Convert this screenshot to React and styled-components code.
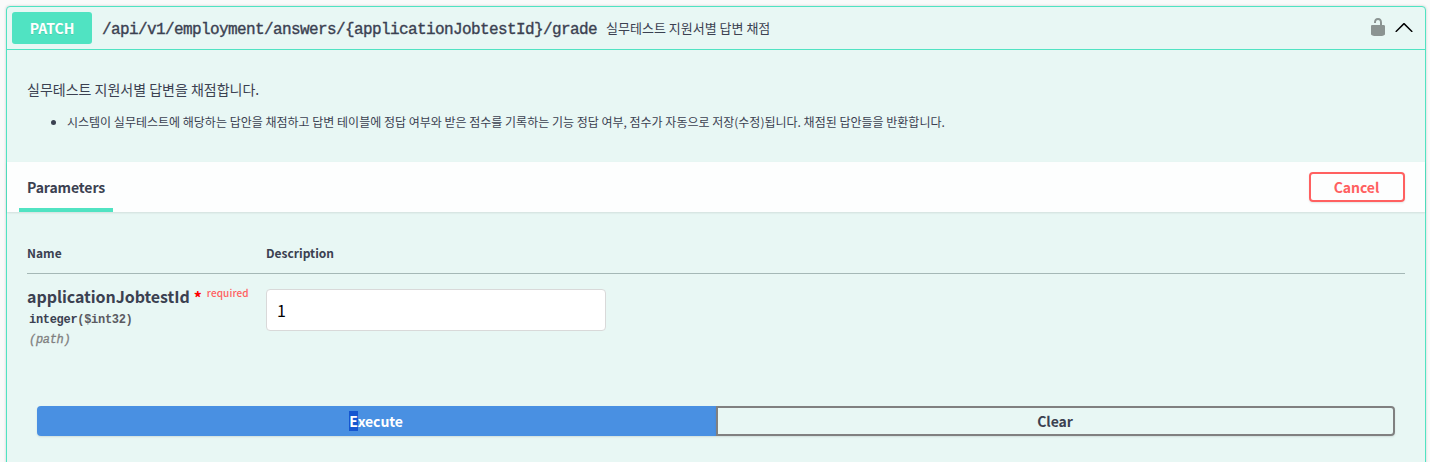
import React from "react";
import styled, { createGlobalStyle } from "styled-components";

const GlobalStyle = createGlobalStyle`
  *, *::before, *::after { box-sizing: border-box; }
  body {
    margin: 0;
    height: 462px;
    overflow: hidden;
    background: #fafafa;
    color: #3b4151;
    font-family: "Noto Sans CJK KR", "Noto Sans", sans-serif;
  }
`;

const Page = styled.main`
  height: 462px;
  padding: 6px 4px 0 6px;
  overflow: hidden;
`;

const Operation = styled.article`
  height: 480px;
  border: 1px solid #50e3c2;
  border-radius: 4px;
  background: #e8f7f4;
  box-shadow: 0 0 3px rgba(0, 0, 0, 0.19);
`;

const Summary = styled.header`
  display: flex;
  align-items: center;
  height: 43px;
  padding: 0 11px 0 5px;
  border-bottom: 1px solid #50e3c2;
`;

const Method = styled.span`
  width: 80px;
  height: 32px;
  border-radius: 3px;
  background: #50e3c2;
  color: #fff;
  font-size: 14px;
  font-weight: 700;
  line-height: 33px;
  text-align: center;
  text-shadow: 0 1px 0 rgba(0, 0, 0, 0.1);
`;

const Path = styled.span`
  margin-left: 10px;
  padding-top: 3px;
  font-family: "Liberation Mono", monospace;
  font-size: 16px;
  letter-spacing: -0.6px;
  line-height: 20px;
  -webkit-text-stroke: 0.35px currentColor;
`;

const SummaryText = styled.span`
  flex: 1;
  margin-left: 9px;
  font-size: 13px;
  line-height: 20px;
`;

const LockIcon = styled.svg`
  width: 20px;
  height: 20px;
  margin-right: 6px;
  margin-top: -2px;
`;

const ChevronIcon = styled.svg`
  width: 20px;
  height: 20px;
  margin-top: -3px;
`;

const Description = styled.section`
  height: 112px;
  padding: 29px 20px 0;
`;

const Lead = styled.p`
  margin: 0;
  font-size: 14px;
  line-height: 20px;
`;

const Notes = styled.ul`
  margin: 14px 0 0;
  padding-left: 40px;
  font-size: 12px;
  line-height: 18px;
`;

const SectionBar = styled.div`
  display: flex;
  align-items: center;
  justify-content: space-between;
  height: 50px;
  padding: 0 20px 0 12px;
  background: #fdfefe;
  box-shadow: 0 1px 2px rgba(0, 0, 0, 0.1);
`;

const Tab = styled.h4`
  width: 94px;
  height: 50px;
  margin: 0;
  padding-left: 8px;
  border-bottom: 4px solid #50e3c2;
  font-size: 14px;
  font-weight: 700;
  letter-spacing: -0.1px;
  line-height: 51px;
  white-space: nowrap;
`;

const Button = styled.button`
  flex: ${(p) => (p.$grow ? "1" : "none")};
  width: ${(p) => p.$width || "auto"};
  height: 30px;
  padding: 0 1px 0 0;
  border: 2px solid ${(p) => p.$border};
  border-radius: ${(p) => p.$radius || "4px"};
  background: ${(p) => p.$fill || "transparent"};
  box-shadow: 0 1px 2px rgba(0, 0, 0, 0.1);
  color: ${(p) => p.$color};
  font-family: inherit;
  font-size: 14px;
  font-weight: 700;
  letter-spacing: -0.08px;
  line-height: 26px;
`;

const Selected = styled.span`
  display: inline-block;
  height: 20px;
  background: #1556d0;
  line-height: 20px;
`;

const Parameters = styled.section`
  padding: 31px 20px 0;
`;

const Columns = styled.div`
  display: grid;
  grid-template-columns: 239px 1fr;
`;

const HeadRow = styled(Columns)`
  height: 31px;
  border-bottom: 1px solid #a5b8b6;
  font-size: 12px;
  font-weight: 700;
  line-height: 20px;
`;

const ParamRow = styled(Columns)`
  height: 132px;
  padding-top: 15px;
`;

const ParamName = styled.div`
  display: flex;
  height: 21px;
  font-size: 16px;
  font-weight: 700;
  letter-spacing: -0.05px;
  line-height: 15px;
`;

const Star = styled.span`
  margin-left: 4px;
  color: #f00;
  font-size: 16px;
  line-height: 16px;
`;

const Required = styled.span`
  margin-left: 5px;
  color: #ff6060;
  font-size: 10px;
  font-weight: 500;
  letter-spacing: 0.1px;
  line-height: 8px;
`;

const Mono = styled.div`
  padding-left: 2px;
  color: ${(p) => p.$color || "inherit"};
  font-family: "Liberation Mono", monospace;
  font-size: 12px;
  font-style: ${(p) => (p.$italic ? "italic" : "normal")};
  font-weight: ${(p) => (p.$italic ? 400 : 700)};
  letter-spacing: -0.3px;
  line-height: 20px;
  -webkit-text-stroke: ${(p) => (p.$italic ? "0.3px currentColor" : "0")};
`;

const Format = styled.span`
  color: #5b5b62;
`;

const TextInput = styled.input`
  width: 340px;
  height: 42px;
  padding: 0 10px;
  border: 1px solid #d9d9d9;
  border-radius: 4px;
  background: #fff;
  color: #000;
  font-family: inherit;
  font-size: 16px;
`;

const Actions = styled.div`
  display: flex;
  padding: 0 10px;
`;

export default function App() {
  return (
    <Page>
      <GlobalStyle />
      <Operation>
        <Summary>
          <Method>PATCH</Method>
          <Path>{"/api/v1/employment/answers/{applicationJobtestId}/grade"}</Path>
          <SummaryText>실무테스트 지원서별 답변 채점</SummaryText>
          <LockIcon viewBox="0 0 20 20" fill="#8b9492">
            <path d="M15.8 8H14V5.6C14 2.703 12.665 1 10 1 7.334 1 6 2.703 6 5.6V6h2v-.801C8 3.754 8.797 3 10 3c1.203 0 2 .754 2 2.199V8H4c-.553 0-1 .646-1 1.199V17c0 .549.428 1.139.951 1.307l1.197.387C5.672 18.861 6.55 19 7.1 19h5.8c.549 0 1.428-.139 1.951-.307l1.196-.387c.524-.167.953-.757.953-1.306V9.199C17 8.646 16.352 8 15.8 8z" />
          </LockIcon>
          <ChevronIcon viewBox="0 0 20 20">
            <path d="M17.418 14.908c.272.281.701.281.979 0s.271-.712 0-.969l-7.908-7.83c-.27-.268-.707-.268-.979 0l-7.908 7.83c-.27.268-.27.701 0 .969.271.268.709.268.979 0L10 7.767l7.418 7.141z" />
          </ChevronIcon>
        </Summary>
        <Description>
          <Lead>실무테스트 지원서별 답변을 채점합니다.</Lead>
          <Notes>
            <li>
              시스템이 실무테스트에 해당하는 답안을 채점하고 답변 테이블에 정답 여부와 받은 점수를 기록하는 기능 정답
              여부, 점수가 자동으로 저장(수정)됩니다. 채점된 답안들을 반환합니다.
            </li>
          </Notes>
        </Description>
        <SectionBar>
          <Tab>Parameters</Tab>
          <Button $width="96px" $border="#ff6060" $color="#ff6060">
            Cancel
          </Button>
        </SectionBar>
        <Parameters>
          <HeadRow>
            <span>Name</span>
            <span>Description</span>
          </HeadRow>
          <ParamRow>
            <div>
              <ParamName>
                applicationJobtestId
                <Star>*</Star>
                <Required>required</Required>
              </ParamName>
              <Mono>
                integer<Format>($int32)</Format>
              </Mono>
              <Mono $italic $color="#808080">
                (path)
              </Mono>
            </div>
            <TextInput defaultValue="1" />
          </ParamRow>
          <Actions>
            <Button $grow $border="#4990e2" $fill="#4990e2" $color="#fff" $radius="4px 0 0 4px">
              <Selected>E</Selected>xecute
            </Button>
            <Button $grow $border="#808080" $color="#3b4151" $radius="0 4px 4px 0">
              Clear
            </Button>
          </Actions>
        </Parameters>
      </Operation>
    </Page>
  );
}
